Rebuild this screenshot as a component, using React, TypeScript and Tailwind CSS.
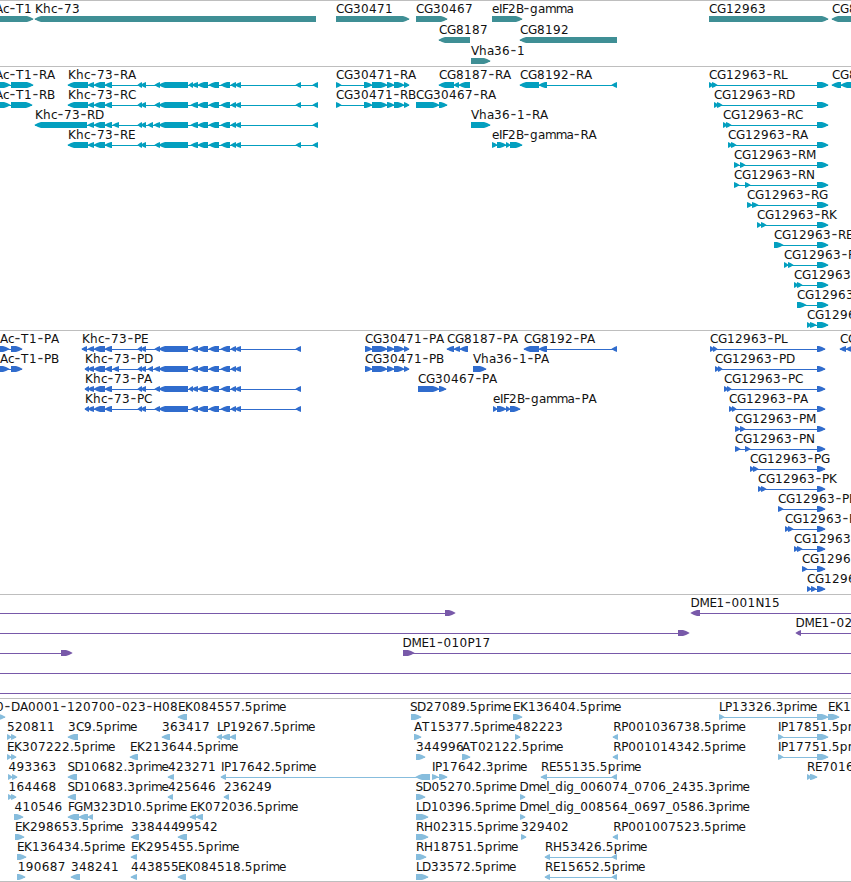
import React from 'react';

type Strand = '+' | '-';
type Span = [number, number];

interface Feature {
    label?: string;
    x?: number;
    strand: Strand;
    exons: Span[];
    line?: Span;
}

interface Track {
    name: string;
    color: string;
    rowClass: string;
    height: string;
    rows: Feature[][];
}

// Pixel advances of the label font
const ADVANCE: Record<string, number> = {
    '.': 3.7, '-': 7, _: 6,
    A: 8, B: 7, C: 8, D: 9, E: 7, F: 6, G: 9, H: 9, I: 3, K: 8, L: 6, M: 10, N: 8.5, P: 7, R: 8, S: 7, T: 8, V: 8,
    a: 7, c: 6, d: 8, e: 7, g: 8, h: 8, i: 3, l: 3, m: 10.7, p: 8, r: 4.7,
};

const glyphPositions = (text: string, start: number) => {
    let x = start;
    return Array.from(text).map((ch) => {
        const at = ch === '-' ? x + 0.4 : x;
        x += ADVANCE[ch] ?? 8;
        return at.toFixed(1);
    }).join(' ');
};

const f = (label: string, strand: Strand, exons: Span[], x?: number, line?: Span): Feature => ({ label, strand, exons, x, line });
const bare = (strand: Strand, exons: Span[], line?: Span): Feature => ({ strand, exons, line });

const khcHead: Span[] = [[88, 94], [94, 105], [105, 112]];
const khcMid: Span[] = [[138, 142], [141, 146], [155, 160], [159, 188]];
const khcMidD: Span[] = [[113, 119], [138, 142], [141, 146], [148, 153], [154, 160], [159, 188]];
const khcTail: Span[] = [[198, 208], [209, 219], [221, 230], [231, 236], [235, 241]];
const khcA: Span[] = [[189, 193], [192, 198]];
const khcC: Span[] = [[191, 198]];

const cg30471: Span[] = [[372, 387], [387, 394], [394, 404], [404, 409]];
const cg8192: Span[] = [[539, 547], [612, 617]];

const rna = (suffix: string, exons: Span[]) => f(`CG12963-${suffix}`, '+', [...exons, [817, 828]]);
const protein = (suffix: string, exons: Span[]) => f(`CG12963-${suffix}`, '+', [...exons, [817, 825]]);

const TRACKS: Track[] = [
    {
        name: 'genes',
        color: '#3f8f95',
        rowClass: 'h-[21px]',
        height: 'h-[66px]',
        rows: [
            [
                f('Ac-T1', '+', [[-20, 33]], -5),
                f('Khc-73', '-', [[35, 316]]),
                f('CG30471', '+', [[336, 409]]),
                f('CG30467', '+', [[416, 447]]),
                f('eIF2B-gamma', '+', [[492, 522]]),
                f('CG12963', '+', [[709, 828]]),
                f('CG8', '-', [[832, 870]]),
            ],
            [f('CG8187', '-', [[439, 470]]), f('CG8192', '-', [[520, 617]])],
            [f('Vha36-1', '+', [[471, 490]])],
        ],
    },
    {
        name: 'transcripts',
        color: '#039fbf',
        rowClass: 'h-5',
        height: 'h-[264px]',
        rows: [
            [
                f('Ac-T1-RA', '+', [[-8, 10], [11, 33]], -5),
                f('Khc-73-RA', '-', [[68, 88], ...khcHead, ...khcMid, ...khcA, ...khcTail, [296, 301], [313, 318]]),
                f('CG30471-RA', '+', [[336, 341], [364, 372], ...cg30471]),
                f('CG8187-RA', '-', [[439, 454], [454, 459], [459, 470]]),
                f('CG8192-RA', '-', [[520, 539], ...cg8192]),
                rna('RL', [[709, 713], [712, 717]]),
                f('CG8', '-', [[832, 841], [841, 870]]),
            ],
            [
                f('Ac-T1-RB', '+', [[-8, 10], [11, 32]], -5),
                f('Khc-73-RC', '-', [[68, 88], ...khcHead, ...khcMid, ...khcC, ...khcTail, [296, 301], [313, 318]]),
                f('CG30471-RB', '+', [[336, 341], [364, 372], ...cg30471]),
                f('CG30467-RA', '+', [[416, 439], [439, 447]]),
                rna('RD', [[714, 718], [717, 722]]),
            ],
            [
                f('Khc-73-RD', '-', [[35, 87], ...khcHead, ...khcMidD, ...khcC, ...khcTail, [313, 318]]),
                f('Vha36-1-RA', '+', [[471, 490]]),
                rna('RC', [[723, 727], [726, 731]]),
            ],
            [
                f('Khc-73-RE', '-', [[68, 88], ...khcHead, ...khcMid, ...khcC, ...khcTail, [296, 301], [313, 318]]),
                f('eIF2B-gamma-RA', '+', [[492, 497], [497, 506], [506, 510], [510, 522]]),
                rna('RA', [[728, 732], [731, 736]]),
            ],
            [rna('RM', [[734, 739], [740, 745]])],
            [rna('RN', [[734, 739], [745, 750]])],
            [rna('RG', [[747, 752], [752, 758]])],
            [rna('RK', [[757, 761], [761, 766]])],
            [rna('RE', [[774, 783]])],
            [rna('RF', [[784, 788], [788, 793]])],
            [rna('RH', [[794, 798], [797, 802]])],
            [rna('RI', [[797, 806]])],
            [rna('RJ', [[807, 811], [810, 816]])],
        ],
    },
    {
        name: 'proteins',
        color: '#306ccd',
        rowClass: 'h-5',
        height: 'h-[264px]',
        rows: [
            [
                f('Ac-T1-PA', '+', [[-4, 9], [11, 22]], 0),
                f('Khc-73-PE', '-', [[82, 87], ...khcHead, ...khcMid, ...khcC, ...khcTail, [296, 301]]),
                f('CG30471-PA', '+', [[365, 372], ...cg30471]),
                f('CG8187-PA', '-', [[447, 454], [454, 460], [460, 468]]),
                f('CG8192-PA', '-', [[524, 539], ...cg8192]),
                protein('PL', [[710, 714], [713, 717]]),
                f('CG', '-', [[840, 846], [846, 870]]),
            ],
            [
                f('Ac-T1-PB', '+', [[-4, 9], [11, 22]], 0),
                f('Khc-73-PD', '-', [[85, 89], ...khcHead, ...khcMidD, ...khcC, ...khcTail]),
                f('CG30471-PB', '+', [[365, 372], ...cg30471]),
                f('Vha36-1-PA', '+', [[473, 486]]),
                protein('PD', [[715, 719], [718, 722]]),
            ],
            [
                f('Khc-73-PA', '-', [[85, 89], ...khcHead, ...khcMid, ...khcA, ...khcTail, [296, 301]]),
                f('CG30467-PA', '+', [[418, 439], [439, 446]]),
                protein('PC', [[724, 728], [727, 731]]),
            ],
            [
                f('Khc-73-PC', '-', [[85, 89], ...khcHead, ...khcMid, ...khcC, ...khcTail, [296, 301]]),
                f('eIF2B-gamma-PA', '+', [[493, 497], [497, 506], [506, 510], [510, 520]]),
                protein('PA', [[729, 733], [732, 736]]),
            ],
            [protein('PM', [[735, 740], [740, 745]])],
            [protein('PN', [[735, 740], [745, 750]])],
            [protein('PG', [[750, 754], [753, 758]])],
            [protein('PK', [[758, 762], [761, 766]])],
            [protein('PE', [[778, 783]])],
            [protein('PF', [[785, 789], [788, 793]])],
            [protein('PH', [[794, 798], [797, 802]])],
            [protein('PI', [[802, 807]])],
            [protein('PJ', [[807, 811], [811, 816]])],
        ],
    },
    {
        name: 'insertions',
        color: '#7859a9',
        rowClass: 'h-5',
        height: 'h-[104px]',
        rows: [
            [bare('+', [[445, 455]], [0, 450]), f('DME1-001N15', '-', [[691, 700]], 690.6, [695, 851])],
            [bare('+', [[678, 689]], [0, 684]), f('DME1-02', '-', [[796, 801]], 795.6, [800, 851])],
            [bare('+', [[61, 72]], [0, 66]), f('DME1-010P17', '+', [[403, 414]], 402.6, [408, 851])],
            [bare('+', [], [0, 851])],
            [bare('+', [], [0, 851])],
        ],
    },
    {
        name: 'ests',
        color: '#87bddd',
        rowClass: 'h-5',
        height: 'h-[183px]',
        rows: [
            [
                f('0-DA0001-120700-023-H08', '+', [[-8, 5]], -4),
                f('EK084557.5prime', '-', [[178, 187]]),
                f('SD27089.5prime', '+', [[411, 421]], 410),
                f('EK136404.5prime', '+', [[513, 522]]),
                f('LP13326.3prime', '+', [[719, 724], [817, 828]]),
                f('EK1', '+', [[828, 839]]),
            ],
            [
                f('520811', '+', [[7, 11], [11, 16]]),
                f('3C9.5prime', '-', [[68, 78]]),
                f('363417', '-', [[162, 170]]),
                f('LP19267.5prime', '-', [[217, 222], [222, 230], [230, 236]]),
                f('AT15377.5prime', '+', [[414, 421]]),
                f('482223', '+', [[515, 520]]),
                f('RP001036738.5prime', '-', [[613, 618]], 613.3),
                f('IP17851.5prime', '+', [[778, 783], [817, 828]]),
            ],
            [
                f('EK307222.5prime', '+', [[7, 11], [11, 16]]),
                f('EK213644.5prime', '-', [[130, 138]]),
                f('344996', '+', [[416, 425]]),
                f('AT02122.5prime', '+', [[462, 470]]),
                f('RP001014342.5prime', '-', [[613, 618]], 613.3),
                f('IP17751.5prime', '+', [[778, 783], [817, 828]]),
            ],
            [
                f('493363', '+', [[8, 12], [12, 17]], 8.5),
                f('SD10682.3prime', '-', [[68, 77]], 67.5),
                f('423271', '-', [[168, 174]]),
                f('IP17642.5prime', '-', [[221, 226], [416, 430]]),
                f('IP17642.3prime', '+', [[432, 438], [439, 447]]),
                f('RE55135.5prime', '-', [[541, 547], [612, 617]]),
                f('RE7016', '+', [[807, 811], [810, 817]]),
            ],
            [
                f('164468', '+', [[8, 12], [11, 16]], 8.5),
                f('SD10683.3prime', '-', [[68, 76]], 67.5),
                f('425646', '-', [[168, 173]]),
                f('236249', '-', [[224, 229]]),
                f('SD05270.5prime', '+', [[416, 425]], 415.5),
                f('Dmel_dig_006074_0706_2435.3prime', '+', [[520, 525]], 519.6),
            ],
            [
                f('410546', '+', [[14, 23]], 14.6),
                f('FGM323D10.5prime', '-', [[68, 79], [79, 88], [88, 93]]),
                f('EK072036.5prime', '-', [[190, 196], [196, 203]]),
                f('LD10396.5prime', '+', [[416, 428]]),
                f('Dmel_dig_008564_0697_0586.3prime', '+', [[520, 525]], 519.6),
            ],
            [
                f('EK298653.5prime', '+', [[15, 24]]),
                f('338444', '-', [[131, 139]]),
                f('99542', '-', [[178, 187]]),
                f('RH02315.5prime', '+', [[416, 428]]),
                f('329402', '+', [[521, 526]]),
                f('RP001007523.5prime', '-', [[613, 618]], 613.3),
            ],
            [
                f('EK136434.5prime', '+', [[17, 26]]),
                f('EK295455.5prime', '-', [[131, 137]]),
                f('RH18751.5prime', '+', [[416, 426]]),
                f('RH53426.5prime', '-', [[545, 550], [612, 617]]),
            ],
            [
                f('190687', '+', [[17, 25]], 17.7),
                f('348241', '-', [[71, 80]]),
                f('443855', '-', [[131, 137]]),
                f('EK084518.5prime', '-', [[178, 186]]),
                f('LD33572.5prime', '+', [[416, 428]]),
                f('RE15652.5prime', '-', [[545, 550], [612, 617]]),
            ],
        ],
    },
];

// Block with a pointed end, small ones are plain triangles
function Exon({ span: [a, b], strand }: { span: Span; strand: Strand }) {
    const tip = Math.min(6, b - a);
    const [flat, point, dir] = strand === '+' ? [a, b, 1] : [b, a, -1];
    const shoulder = point - dir * tip;
    const cheek = point - dir * tip * 0.5;
    return (
        <polygon
            points={`${flat},15 ${shoulder},15 ${cheek},16.1 ${point + dir * 0.4},17.7 ${point + dir * 0.4},18.3 ${cheek},19.9 ${shoulder},21 ${flat},21`}
        />
    );
}

function FeatureGlyph({ feature, color }: { feature: Feature; color: string }) {
    const { label, strand, exons, line } = feature;
    const [from, to] = line ?? [exons[0][0], exons[exons.length - 1][1]];
    return (
        <g>
            <g fill={color}>
                <rect x={from} y={18} width={to - from} height={1} />
                {exons.map((span, i) => (
                    <Exon key={i} span={span} strand={strand} />
                ))}
            </g>
            {label && (
                <text x={glyphPositions(label, feature.x ?? exons[0][0])} y={12} fill="#111">
                    {label.split(/(-)/).map((part, i) => (
                        part === '-' ? <tspan key={i} className="fill-[#333] text-[16px]">-</tspan> : part
                    ))}
                </text>
            )}
        </g>
    );
}

function TrackPanel({ track }: { track: Track }) {
    return (
        <section className={`${track.height} shrink-0 border-t border-[#bebebe]`}>
            {track.rows.map((row, i) => (
                <svg key={i} className={`${track.rowClass} block w-full overflow-visible`}>
                    {row.map((feature, j) => (
                        <FeatureGlyph key={j} feature={feature} color={track.color} />
                    ))}
                </svg>
            ))}
        </section>
    );
}

export default function App() {
    return (
        <main className="flex h-[882px] w-[851px] flex-col overflow-hidden bg-white font-['DejaVu_Sans',sans-serif] text-[12px]">
            {TRACKS.map((track) => (
                <TrackPanel key={track.name} track={track} />
            ))}
            <div className="h-px shrink-0 bg-[#bebebe]" />
        </main>
    );
}
